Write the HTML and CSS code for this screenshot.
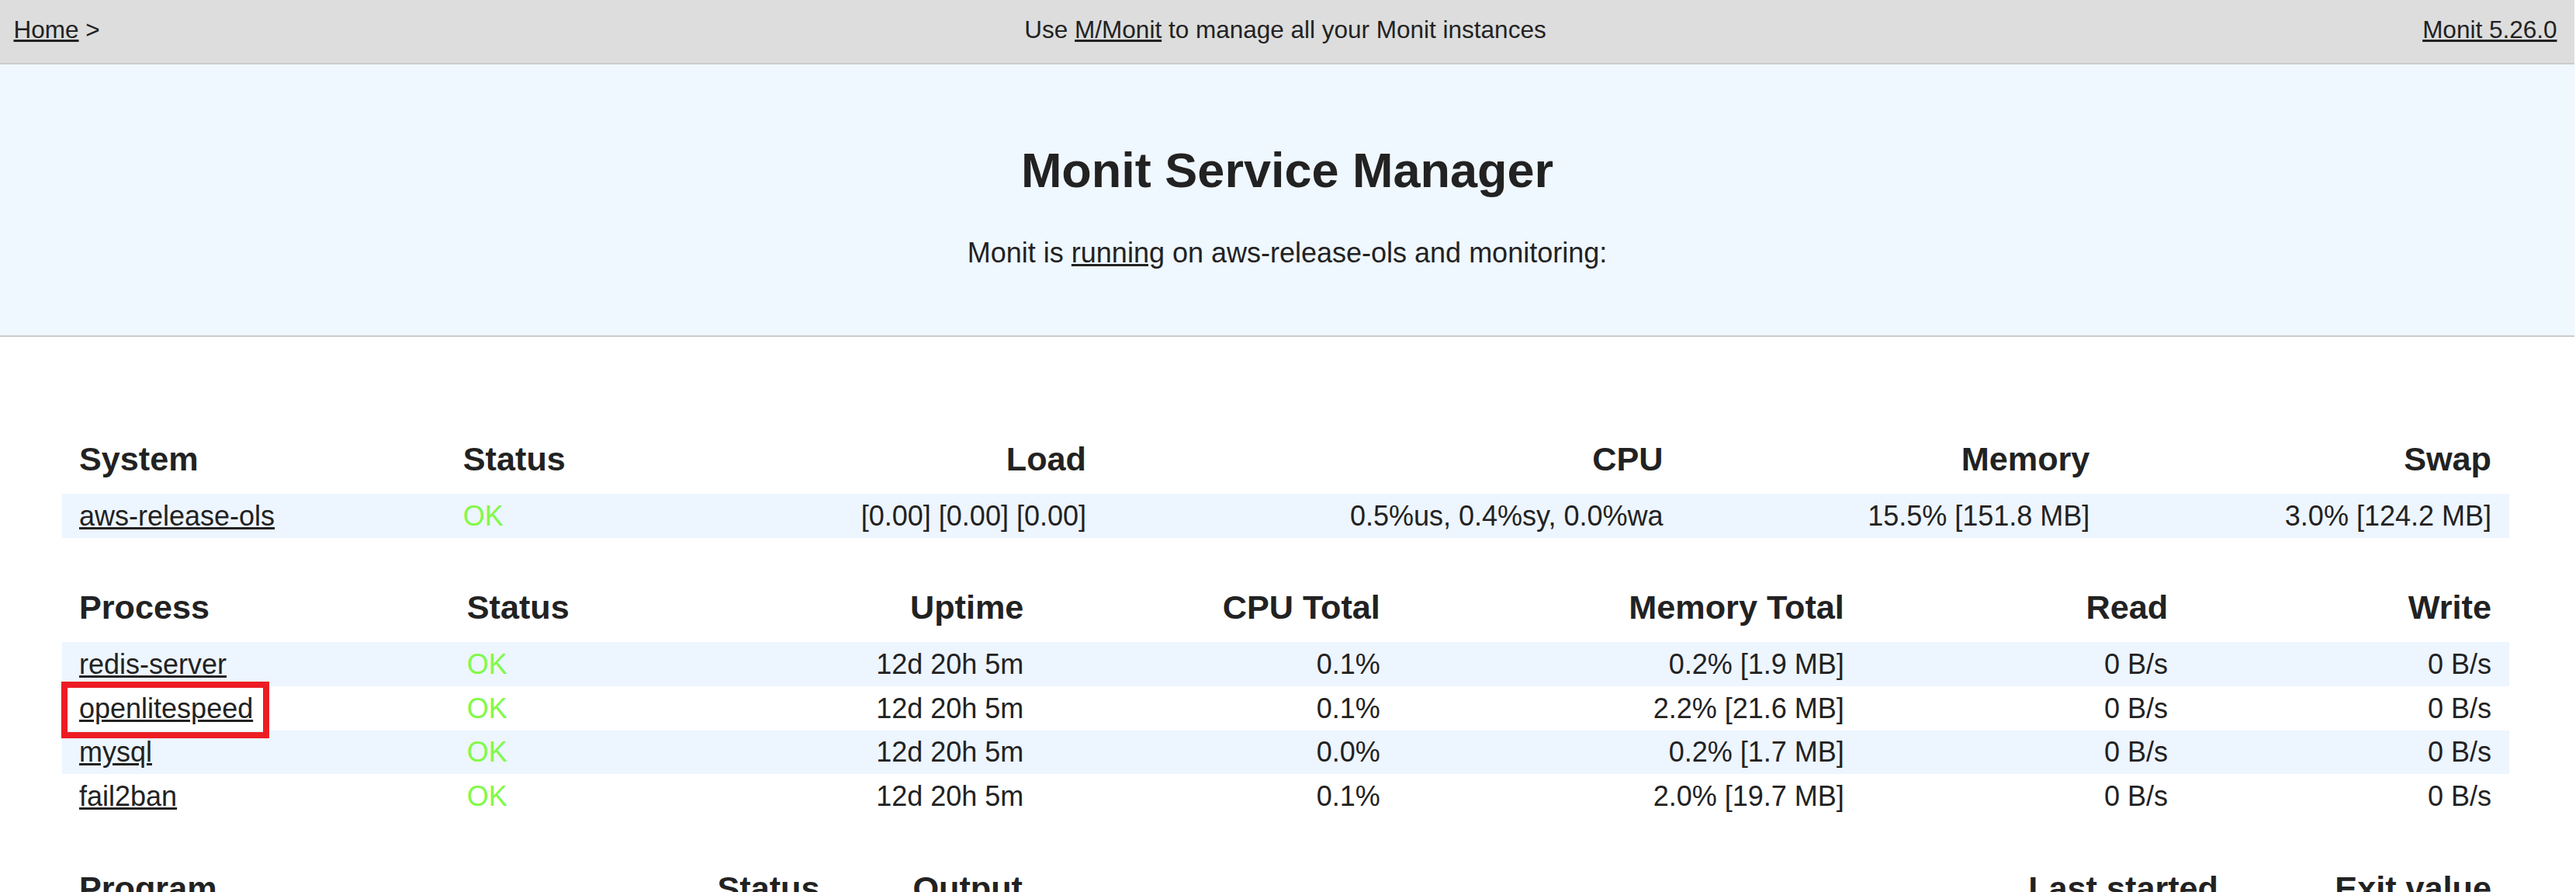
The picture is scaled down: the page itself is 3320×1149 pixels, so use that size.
FILE: index.html
```html
<!DOCTYPE html>
<html lang="en">
<head>
<meta charset="utf-8">
<title>Monit: aws-release-ols</title>
<link rel="stylesheet" href="styles.css">
</head>
<body>
<div class="nav">
  <div class="nav-left"><a href="#">Home</a>&nbsp;&gt;&nbsp;</div>
  <div class="nav-center">Use <a href="#">M/Monit</a> to manage all your Monit instances</div>
  <div class="nav-right"><a href="#">Monit 5.26.0</a></div>
</div>
<div class="header">
  <h1>Monit Service Manager</h1>
  <p class="intro">Monit is <a href="#">running</a> on aws-release-ols and monitoring:</p>
</div>
<main class="main">
  <table class="status sys">
    <colgroup><col><col><col><col><col><col></colgroup>
    <tr>
      <th class="left">System</th>
      <th class="left">Status</th>
      <th class="right">Load</th>
      <th class="right">CPU</th>
      <th class="right">Memory</th>
      <th class="right">Swap</th>
    </tr>
    <tr class="stripe">
      <td class="left"><a href="#">aws-release-ols</a></td>
      <td class="left ok">OK</td>
      <td class="right">[0.00]&nbsp;[0.00]&nbsp;[0.00]</td>
      <td class="right">0.5%us,&nbsp;0.4%sy,&nbsp;0.0%wa</td>
      <td class="right">15.5% [151.8 MB]</td>
      <td class="right">3.0% [124.2 MB]</td>
    </tr>
  </table>
  <table class="status proc">
    <colgroup><col><col><col><col><col><col><col></colgroup>
    <tr>
      <th class="left">Process</th>
      <th class="left">Status</th>
      <th class="right">Uptime</th>
      <th class="right">CPU Total</th>
      <th class="right">Memory Total</th>
      <th class="right">Read</th>
      <th class="right">Write</th>
    </tr>
    <tr class="stripe">
      <td class="left"><a href="#">redis-server</a></td>
      <td class="left ok">OK</td>
      <td class="right">12d 20h 5m</td>
      <td class="right">0.1%</td>
      <td class="right">0.2% [1.9 MB]</td>
      <td class="right">0 B/s</td>
      <td class="right">0 B/s</td>
    </tr>
    <tr>
      <td class="left"><span class="mark"><a href="#">openlitespeed</a></span></td>
      <td class="left ok">OK</td>
      <td class="right">12d 20h 5m</td>
      <td class="right">0.1%</td>
      <td class="right">2.2% [21.6 MB]</td>
      <td class="right">0 B/s</td>
      <td class="right">0 B/s</td>
    </tr>
    <tr class="stripe">
      <td class="left"><a href="#">mysql</a></td>
      <td class="left ok">OK</td>
      <td class="right">12d 20h 5m</td>
      <td class="right">0.0%</td>
      <td class="right">0.2% [1.7 MB]</td>
      <td class="right">0 B/s</td>
      <td class="right">0 B/s</td>
    </tr>
    <tr>
      <td class="left"><a href="#">fail2ban</a></td>
      <td class="left ok">OK</td>
      <td class="right">12d 20h 5m</td>
      <td class="right">0.1%</td>
      <td class="right">2.0% [19.7 MB]</td>
      <td class="right">0 B/s</td>
      <td class="right">0 B/s</td>
    </tr>
  </table>
  <table class="status prog">
    <colgroup><col><col><col><col><col></colgroup>
    <tr>
      <th class="left">Program</th>
      <th class="left">Status</th>
      <th class="left">Output</th>
      <th class="right">Last started</th>
      <th class="right">Exit value</th>
    </tr>
  </table>
</main>
</body>
</html>
```

FILE: styles.css
```css
html {
  overflow: hidden;
}

body {
  margin: 0 2px 0 0;
  background: #ffffff;
  color: #222222;
  font-family: "Liberation Sans", Arial, Helvetica, sans-serif;
  font-size: 36px;
  line-height: 45px;
}

a {
  color: #222222;
  text-decoration: underline;
}

/* top navigation bar */
.nav {
  display: grid;
  grid-template-columns: 20% 60% 20%;
  box-sizing: content-box;
  height: 36px;
  padding: 20px 22.5px 25px 17.5px;
  background: #dddddd;
  border-bottom: 2px solid #cccccc;
  font-size: 31.5px;
  line-height: 36px;
  white-space: nowrap;
}

.nav-center {
  text-align: center;
}

.nav-right {
  text-align: right;
}

/* header */
.header {
  background: #eff7ff;
  border-bottom: 2px solid #cccccc;
  padding: 100px 0 84px;
}

.header h1 {
  margin: 0;
  font-size: 63px;
  line-height: 72px;
  font-weight: bold;
  text-align: center;
  color: #222222;
}

.intro {
  margin: 48.3px 0 0;
  text-align: center;
  font-size: 36px;
  line-height: 45px;
}

/* status tables */
.main {
  margin-top: 67.2px;
  padding-right: 5px;
}

.status {
  width: 3154px;
  margin: 0 auto;
  border-collapse: collapse;
  border: 0;
  table-layout: fixed;
}

.status th {
  padding: 67.5px 22.5px 22.5px;
  font-size: 43.2px;
  line-height: 44.5px;
  font-weight: bold;
  white-space: nowrap;
}

.status td {
  padding: 6.75px 22.5px;
  font-size: 36px;
  line-height: 43.25px;
  white-space: nowrap;
}

.left {
  text-align: left;
}

.right {
  text-align: right;
}

.stripe {
  background: #edf5ff;
}

.ok {
  color: #80fa48;
}

/* column widths */
.sys col:nth-child(1) { width: 494.8px; }
.sys col:nth-child(2) { width: 424px; }
.sys col:nth-child(3) { width: 424.2px; }
.sys col:nth-child(4) { width: 743.5px; }
.sys col:nth-child(5) { width: 549.9px; }
.sys col:nth-child(6) { width: 517.6px; }

.proc col:nth-child(1) { width: 499.7px; }
.proc col:nth-child(2) { width: 381px; }
.proc col:nth-child(3) { width: 381.7px; }
.proc col:nth-child(4) { width: 459.5px; }
.proc col:nth-child(5) { width: 598px; }
.proc col:nth-child(6) { width: 417.2px; }
.proc col:nth-child(7) { width: 416.9px; }

.prog col:nth-child(1) { width: 822.5px; }
.prog col:nth-child(2) { width: 252px; }
.prog col:nth-child(3) { width: 1300px; }
.prog col:nth-child(4) { width: 427.5px; }
.prog col:nth-child(5) { width: 352px; }

/* red annotation box around a process name */
.mark {
  position: relative;
  display: inline-block;
}

.mark::after {
  content: "";
  position: absolute;
  left: -23.5px;
  right: -20.7px;
  top: -12.5px;
  bottom: -17.3px;
  border: 8px solid #ed1c24;
  pointer-events: none;
}
```
